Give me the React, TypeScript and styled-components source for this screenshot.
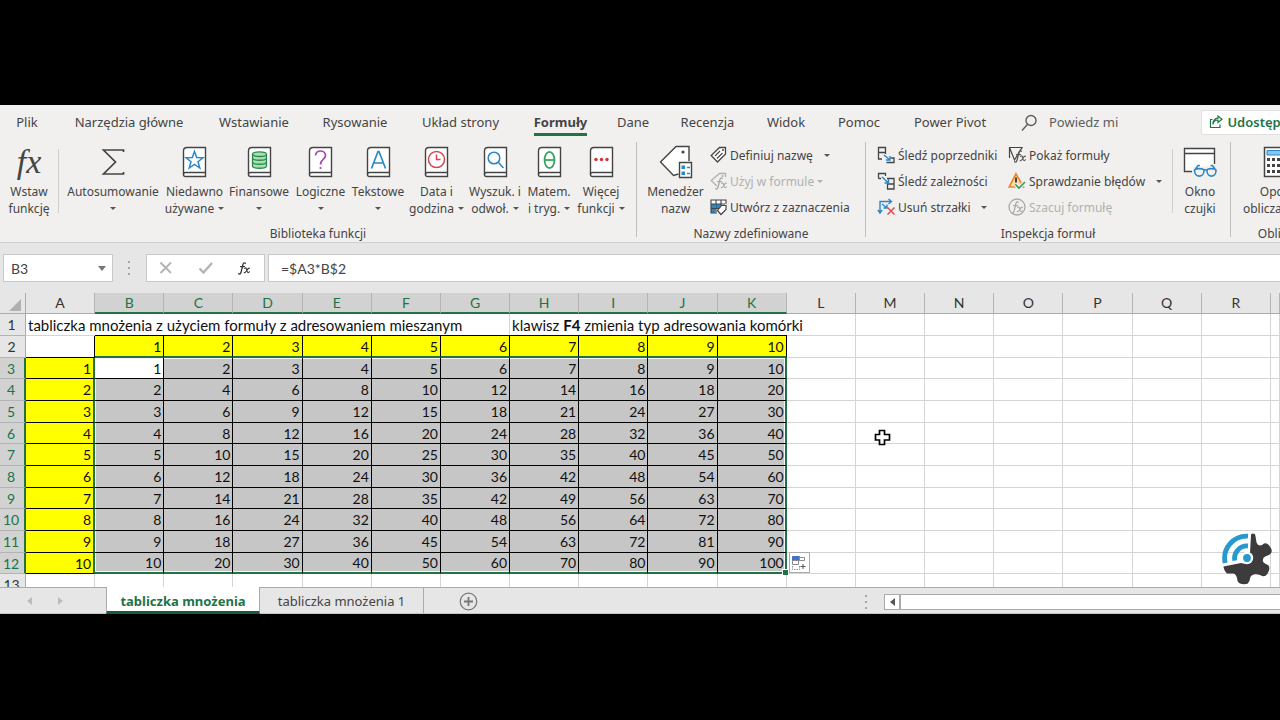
import React from 'react';
import styled, { createGlobalStyle, css } from 'styled-components';

const ink = '#444444';
const green = '#217346';
const darkGreen = '#185c37';
const blue = '#2b88c8';
const uiFont = '"Noto Sans", "Open Sans", sans-serif';
const cellFont = 'Lato, "Open Sans", sans-serif';

const GlobalStyle = createGlobalStyle`
  * { box-sizing: border-box; }
  body { margin: 0; background: #000; font-family: ${uiFont}; color: ${ink}; }
  button, input { font: inherit; color: inherit; }
  button { border: 0; background: none; padding: 0; margin: 0; }
`;

const Page = styled.div`
  min-height: 100vh;
  display: flex;
  flex-direction: column;
  justify-content: center;
  padding-bottom: 1px;
  overflow: hidden;
`;

const Workbook = styled.main`
  position: relative;
  background: #e6e6e6;
  overflow: hidden;
`;

/* ---------- ribbon ---------- */

const Ribbon = styled.header`
  background: #f1f0ef;
  border-bottom: 1px solid #d0d0d0;
`;

const TabRow = styled.nav`
  display: flex;
  align-items: center;
  height: 34px;
  overflow: hidden;
`;

const Tab = styled.button<{ $w: number; $active?: boolean }>`
  flex: none;
  width: ${p => p.$w}px;
  font-size: 13px;
  line-height: 20px;
  white-space: nowrap;
  ${p => p.$active && css`font-weight: 700;`}
  span {
    display: inline-block;
    padding: 4px 0 1px;
    border-bottom: 3px solid ${p => (p.$active ? green : 'transparent')};
  }
`;

const TellMe = styled.button`
  flex: none;
  display: flex;
  align-items: center;
  gap: 12px;
  margin-left: 22px;
  font-size: 13px;
  line-height: 20px;
  color: #5c5c5c;
  white-space: nowrap;
`;

const Share = styled.button`
  flex: none;
  display: flex;
  align-items: center;
  gap: 4px;
  height: 25px;
  margin-left: 83px;
  padding: 0 12px 0 7px;
  background: #fff;
  border: 1px solid #e2e0de;
  border-radius: 2px;
  color: ${green};
  font-size: 13px;
  font-weight: 600;
  line-height: 20px;
  white-space: nowrap;
`;

const Groups = styled.div`
  display: flex;
  height: 103px;
  overflow: hidden;
`;

const Group = styled.section<{ $w: number }>`
  flex: none;
  width: ${p => p.$w}px;
  display: flex;
  flex-direction: column;
  justify-content: space-between;
`;

const GroupBody = styled.div<{ $indent?: number }>`
  display: flex;
  padding-left: ${p => p.$indent ?? 0}px;
`;

const GroupTitle = styled.h2`
  margin: 0;
  text-align: center;
  font-size: 12px;
  font-weight: 400;
  line-height: 16px;
`;

const Divider = styled.i`
  flex: none;
  width: 1px;
  margin: 3px 0 5px;
  background: #c0bfbe;
`;

const InnerDivider = styled.i`
  flex: none;
  width: 1px;
  height: 64px;
  margin-top: 10px;
  background: #d0cfce;
`;

const BigButton = styled.button<{ $w: number }>`
  flex: none;
  width: ${p => p.$w}px;
  display: flex;
  flex-direction: column;
  align-items: center;
  padding-top: 5px;
  font-size: 12px;
  line-height: 17px;
  white-space: nowrap;
`;

const BigIcon = styled.span`
  display: grid;
  place-items: center;
  height: 36px;
  margin-bottom: 3px;
`;

const LabelLine = styled.span`
  display: flex;
  align-items: center;
  gap: 4px;
  min-height: 17px;
`;

const Caret = styled.i<{ $faded?: boolean }>`
  border: 3px solid transparent;
  border-top-color: ${p => (p.$faded ? '#b0b0b0' : '#555')};
  border-bottom: 0;
`;

const CommandList = styled.div`
  display: flex;
  flex-direction: column;
  margin-top: 3px;
`;

const Command = styled.button`
  display: flex;
  align-items: center;
  height: 26px;
  gap: 3px;
  font-size: 12px;
  line-height: 17px;
  white-space: nowrap;
  &:disabled { color: #b0b0b0; }
  svg { flex: none; }
`;

const CaretSlot = styled.span<{ $gap: number }>`
  display: flex;
  margin-left: ${p => p.$gap}px;
`;

/* ---------- formula bar ---------- */

const FormulaBar = styled.div`
  display: flex;
  align-items: center;
  padding: 11px 0 11px 3px;
  font-family: ${cellFont};
  font-size: 14px;
`;

const Box = styled.div`
  display: flex;
  align-items: center;
  height: 28px;
  background: #fff;
  border: 1px solid #c8c8c8;
`;

const NameBox = styled(Box)`
  width: 110px;
  padding-right: 6px;
`;

const BoxInput = styled.input`
  flex: 1;
  min-width: 0;
  height: 100%;
  border: 0;
  outline: 0;
  background: none;
  padding: 0 0 0 7px;
`;

const FormulaBox = styled(Box)`
  flex: 1;
  margin-left: 3px;
  border-right: 0;
  padding-left: 5px;
`;

const NameCaret = styled.i`
  border: 4px solid transparent;
  border-top: 5px solid #777;
  border-bottom: 0;
`;

const Grip = styled.i`
  width: 2px;
  height: 14px;
  background: repeating-linear-gradient(#a6a6a6 0 2px, transparent 2px 6px);
`;

const NameGrip = styled(Grip)`
  margin: 0 16px 0 15px;
`;

const FormulaActions = styled(Box)`
  width: 119px;
  justify-content: space-between;
  padding: 0 12px;
  button { display: flex; }
`;

/* ---------- worksheet ---------- */

const Sheet = styled.div`
  position: relative;
  height: 294px;
  overflow: hidden;
  font-family: ${cellFont};
`;

const Grid = styled.table`
  width: 100%;
  table-layout: fixed;
  border-collapse: separate;
  border-spacing: 0;
  font-size: 14px;
  line-height: 18px;
  color: #111;
  tbody tr { height: 22px; }
  tbody tr:nth-child(3n) { height: 21px; }
`;

const Corner = styled.th`
  height: 21px;
  padding: 0;
  border-right: 1px solid #ababab;
  border-bottom: 1px solid #ababab;
  svg { display: block; margin: 4px 0 0 8px; }
`;

const ColHead = styled.th<{ $on?: boolean }>`
  height: 21px;
  padding: 0;
  font-weight: 400;
  color: ${p => (p.$on ? green : '#333')};
  background: ${p => (p.$on ? '#d2d2d2' : '#e6e6e6')};
  border-right: 1px solid #b4b4b4;
  border-bottom: ${p => (p.$on ? `2px solid ${green}` : '1px solid #ababab')};
`;

const RowHead = styled.th<{ $on?: boolean }>`
  padding: 1px 2px 0 0;
  font-weight: 400;
  color: ${p => (p.$on ? green : '#333')};
  background: ${p => (p.$on ? '#d2d2d2' : '#e6e6e6')};
  border-bottom: 1px solid #b4b4b4;
  border-right: ${p => (p.$on ? `2px solid ${green}` : '1px solid #ababab')};
`;

type Kind = 'plain' | 'factorTop' | 'factorLeft' | 'product';

const Cell = styled.td<{
  $kind?: Kind; $active?: boolean; $top?: boolean; $left?: boolean;
  $bottom?: boolean; $right?: boolean; $corner?: boolean;
}>`
  padding: 1px 2px 0;
  text-align: right;
  white-space: nowrap;
  background: #fff;
  border-right: 1px solid #d4d4d4;
  border-bottom: 1px solid #d4d4d4;
  ${p => p.$corner && css`border-color: #000;`}
  ${p => p.$kind === 'factorTop' && css`
    padding-top: 2px;
    background: #ffff00;
    border-right-color: #000;
    border-bottom: 2px solid ${green};
    box-shadow: 0 -1px 0 #000;
  `}
  ${p => p.$kind === 'factorLeft' && css`
    background: #ffff00;
    border-bottom-color: #000;
    border-right: 2px solid ${green};
  `}
  ${p => p.$kind === 'product' && css`
    position: relative;
    background: ${p.$active ? '#fff' : '#c6c6c6'};
    border-color: #000;
    ${p.$right && css`padding-right: 1px; border-right: 2px solid ${green};`}
    ${p.$bottom && css`border-bottom: 2px solid ${green};`}
    box-shadow:
      inset ${p.$left ? 1 : 0}px ${p.$top ? 1 : 0}px 0 #f4f4f4,
      inset ${p.$right ? -1 : 0}px ${p.$bottom ? -1 : 0}px 0 #f4f4f4;
  `}
`;

const TextCell = styled(Cell)`
  padding-top: 0;
  text-align: left;
  font-size: 15px;
`;

const FillHandle = styled.i`
  position: absolute;
  right: -3px;
  bottom: -3px;
  width: 6px;
  height: 6px;
  background: ${green};
  border: 1px solid #fff;
  border-width: 1px 0 0 1px;
`;

const FillOptions = styled.button`
  position: absolute;
  left: calc(100% + 4px);
  top: -1px;
  width: 21px;
  height: 21px;
  display: grid;
  place-items: center;
  background: #fff;
  border: 1px solid #ababab;
  z-index: 1;
`;

const Pointer = styled.svg`
  position: absolute;
  left: 874px;
  top: 136px;
`;

const Watermark = styled.svg`
  position: absolute;
  right: 7px;
  bottom: 28px;
  z-index: 2;
`;

/* ---------- sheet tabs ---------- */

const SheetBar = styled.footer`
  display: flex;
  align-items: stretch;
  height: 27px;
  border-top: 1px solid #ababab;
  border-bottom: 1px solid #c4c4c4;
  font-size: 13px;
`;

const SheetNav = styled.div`
  display: flex;
  align-items: center;
  gap: 26px;
  width: 106px;
  padding-left: 27px;
  button { display: flex; }
`;

const SheetTab = styled.button<{ $active?: boolean }>`
  flex: none;
  width: ${p => (p.$active ? 154 : 164)}px;
  padding-top: 1px;
  white-space: nowrap;
  line-height: 20px;
  border-right: 1px solid #ababab;
  ${p => p.$active && css`
    margin: -1px 0;
    padding-top: 3px;
    font-weight: 700;
    color: ${green};
    background: #fff;
    border-left: 1px solid #ababab;
    border-bottom: 3px solid ${darkGreen};
  `}
`;

const AddSheet = styled.button`
  display: flex;
  align-items: center;
  margin-left: 35px;
  padding-top: 2px;
`;

const ScrollArea = styled.div`
  display: flex;
  align-items: center;
  width: 415px;
  margin-left: auto;
  padding-top: 2px;
`;

const ScrollArrow = styled.button`
  display: grid;
  place-items: center;
  width: 16px;
  height: 16px;
  margin-left: 17px;
  background: #fff;
  border: 1px solid #ababab;
`;

const ScrollThumb = styled.div`
  flex: 1;
  height: 16px;
  background: #fff;
  border: 1px solid #ababab;
  border-right: 0;
`;

/* ---------- drawings ---------- */

const Book = ({ children }: { children: React.ReactNode }) => (
  <svg width="25" height="32" viewBox="0 0 25 32" fill="none">
    <path d="M5 1.5H23.5V30.5H3.5Q1.5 30.5 1.5 28.5V5Q1.5 1.5 5 1.5Z" fill="#fff" stroke="#444" strokeWidth="1.4" />
    <path d="M1.5 28.5Q1.5 26.5 3.5 26.5H23.5" stroke="#444" strokeWidth="1.4" />
    {children}
  </svg>
);

const Fx = styled.span<{ $size: number }>`
  font-family: "Liberation Serif", serif;
  font-style: italic;
  font-size: ${p => p.$size}px;
  line-height: 1;
`;

const SmallFx = ({ x = 0, y = 0, color = '#555' }: { x?: number; y?: number; color?: string }) => (
  <g transform={`translate(${x} ${y})`} fill="none" stroke={color} strokeLinecap="round">
    <path d="M7.4 1.2C6.2 .2 5.2 1.2 4.8 3L3.2 9.6C2.8 11.6 1.8 12.6 .6 11.8M2.6 4.6H6.4" strokeWidth="1.3" />
    <path d="M6.6 6.4C8.6 4.8 8.4 7.4 9 9C9.4 10.8 10.4 11.2 11.4 9.8M11.4 6.2C9.4 5.4 8.6 10.6 6.2 10.8" strokeWidth="1.1" />
  </g>
);

const SigmaIcon = () => (
  <svg width="24" height="28" viewBox="0 0 24 28" fill="none" stroke="#444" strokeWidth="1.7">
    <path d="M22.5 4V2H2.5L14.5 14L2.5 26H22.5V24" />
  </svg>
);

const StarGlyph = () => (
  <path d="M12.5 5.5L14.7 11.6L21 11.8L16 15.7L17.8 22L12.5 18.4L7.2 22L9 15.7L4 11.8L10.3 11.6Z" stroke={blue} strokeWidth="1.5" />
);
const CoinsGlyph = () => (
  <g stroke="#2a8a4a" strokeWidth="1.3" fill="#a8e0b4">
    <path d="M5.5 8V20C5.5 23 19.5 23 19.5 20V8" />
    <ellipse cx="12.5" cy="8.2" rx="7" ry="2.3" />
    <path d="M5.5 12C5.5 15 19.5 15 19.5 12M5.5 16C5.5 19 19.5 19 19.5 16" fill="none" />
  </g>
);
const QuestionGlyph = () => (
  <g stroke="#a646b4" strokeWidth="1.7">
    <path d="M7.5 9.5C7.5 3.5 17.5 3.5 17.5 9.5C17.5 13.5 12.5 13.5 12.5 18.5" />
    <path d="M12.5 21V23" />
  </g>
);
const LetterGlyph = () => <path d="M5.5 22.5L12 5.5H13L19.5 22.5M8 17H17" stroke={blue} strokeWidth="1.7" />;
const ClockGlyph = () => (
  <g stroke="#d64550" strokeWidth="1.5">
    <circle cx="12.5" cy="13.5" r="8" />
    <path d="M12.5 8.5V13.5H16.5" />
  </g>
);
const LensGlyph = () => (
  <g stroke={blue} strokeWidth="1.6">
    <circle cx="11" cy="12" r="5.8" />
    <path d="M15.2 16.2L20.5 22" />
  </g>
);
const ThetaGlyph = () => (
  <g stroke="#2fa35a" strokeWidth="1.7">
    <ellipse cx="12.5" cy="14" rx="5" ry="8.2" />
    <path d="M7.5 14H17.5" />
  </g>
);
const DotsGlyph = () => (
  <g fill="#d13438">
    <circle cx="7" cy="13.5" r="1.7" />
    <circle cx="12.5" cy="13.5" r="1.7" />
    <circle cx="18" cy="13.5" r="1.7" />
  </g>
);

const NameManagerIcon = () => (
  <svg width="34" height="34" viewBox="0 0 34 34" fill="none">
    <path d="M19.5 29L14.5 30.5L1.5 17L17 1.5L30 1.5V16" fill="#fff" stroke="#444" strokeWidth="1.4" />
    <circle cx="24" cy="7" r="1.6" fill="#444" />
    <path d="M20.5 17.5H32.5V32.5H20.5Z" fill="#fff" stroke="#444" strokeWidth="1.4" />
    <path d="M22.5 20.5H26V24H22.5ZM22.5 26.5H26V30H22.5Z" fill={blue} />
    <path d="M28 22.5H31M28 28.5H31" stroke={blue} strokeWidth="1.3" />
  </svg>
);

const TagIcon = () => (
  <svg width="17" height="18" viewBox="0 0 17 18" fill="none" stroke="#444" strokeWidth="1.3">
    <path d="M9.5 1.5H15.5V8L7.5 16L1.2 9.5Z" fill="#fff" />
    <circle cx="13" cy="4" r="1" fill="#444" stroke="none" />
    <path d="M5 10L10 5M7 12.5L12.5 7" strokeWidth="1.1" />
  </svg>
);

const UseInFormulaIcon = () => (
  <svg width="17" height="18" viewBox="0 0 17 18" fill="none">
    <path d="M7 14L1.2 8.5L9.5 1.5H15.5V5" stroke="#b0b0b0" strokeWidth="1.3" />
    <circle cx="12.5" cy="4" r="1" fill="#b0b0b0" />
    <SmallFx x={5} y={5} color="#a8a8a8" />
  </svg>
);

const FromSelectionIcon = () => (
  <svg width="17" height="18" viewBox="0 0 17 18" fill="none">
    <path d="M1 2H16V6H11L6 15H1Z" fill="#fff" />
    <path d="M1 6H5.5V15H1ZM6 6H11V10H6Z" fill={blue} />
    <path d="M16 6V2H1V15H7M1 6H15M1 10.5H9M6 2V14M11 2V7" stroke="#444" strokeWidth="1.1" />
    <path d="M11.5 7.5H16V11.5L11 16.5L7.5 12.5Z" fill="#fff" stroke="#444" strokeWidth="1.2" />
  </svg>
);

const PrecedentsIcon = () => (
  <svg width="18" height="18" viewBox="0 0 18 18" fill="none">
    <path d="M1.5 1.5H8.5V6.5H1.5ZM5 13H1.5V6.5H8.5V8M9.5 16.5H17V12H14" stroke="#444" strokeWidth="1.3" />
    <path d="M7 9L13 14M13 10V14H9" stroke={blue} strokeWidth="1.5" />
  </svg>
);

const DependentsIcon = () => (
  <svg width="18" height="18" viewBox="0 0 18 18" fill="none">
    <path d="M1.5 6.5V1.5H8.5V4M4 6.5H1.5M10 6.5H17V17H10.5V12H17M10.5 12V13.5" stroke="#444" strokeWidth="1.3" />
    <path d="M5 5L11.5 11M11.5 7V11H7.5" stroke={blue} strokeWidth="1.5" />
  </svg>
);

const RemoveArrowsIcon = () => (
  <svg width="18" height="18" viewBox="0 0 18 18" fill="none">
    <path d="M3 15V3.5H14M11.5 1L14.5 3.5L11.5 6M.8 12L3 15L5.2 12M5 6L10 10M10 6.5V10H6.5" stroke={blue} strokeWidth="1.4" />
    <path d="M10.5 9.5L17.5 16.5M17.5 9.5L10.5 16.5" stroke="#e04a4a" strokeWidth="1.5" />
  </svg>
);

const ShowFormulasIcon = () => (
  <svg width="18" height="18" viewBox="0 0 18 18" fill="none">
    <path d="M1.5 12V1.5H14L6.5 14L1.5 1.5" stroke="#444" strokeWidth="1.2" />
    <SmallFx x={6} y={4} />
  </svg>
);

const ErrorCheckIcon = () => (
  <svg width="18" height="18" viewBox="0 0 18 18" fill="none">
    <path d="M8 1.8L15.5 15H1.2Z" fill="#fbd9a8" stroke="#e8862e" strokeWidth="1.6" />
    <path d="M8 5.5V10.5M8 12V13.5" stroke="#333" strokeWidth="1.8" />
    <path d="M7.5 12.5L11 16L17 10" stroke="#f1f0ef" strokeWidth="4" />
    <path d="M7.5 12.5L11 16L17 10" stroke="#35a15b" strokeWidth="1.7" />
  </svg>
);

const EvaluateIcon = () => (
  <svg width="18" height="18" viewBox="0 0 18 18" fill="none">
    <circle cx="9" cy="9" r="8" stroke="#a8a8a8" strokeWidth="1.3" />
    <SmallFx x={3} y={3} color="#a8a8a8" />
  </svg>
);

const WatchIcon = () => (
  <svg width="34" height="30" viewBox="0 0 34 30" fill="none">
    <path d="M2 2H31V17L27 19L10 20V24H2Z" fill="#fff" />
    <path d="M9 24.5H1.5V1.5H31.5V17M1.5 6.5H31.5" stroke="#444" strokeWidth="1.4" />
    <path
      d="M11.5 23.5C11.5 21 21 21 21 23.5C21 31 11.5 31 11.5 23.5ZM24 23.5C24 21 33 21 33 23.5C33 31 24 31 24 23.5ZM21 23.5Q22.5 22 24 23.5M11.5 23.5L15 18.5H17M33 23.5L29.5 18.5H27.5"
      stroke={blue} strokeWidth="1.6"
    />
  </svg>
);

const CalcIcon = () => (
  <svg width="26" height="32" viewBox="0 0 26 32" fill="none">
    <path d="M1.5 1.5H24.5V30.5H1.5Z" fill="#fff" stroke="#444" strokeWidth="1.5" />
    <path d="M4 4.5H22V9H4Z" fill="#8cc4f0" stroke={blue} />
    {[12, 18, 24].map(y => [4, 9, 14, 19].map(x => <rect key={`${x}-${y}`} x={x} y={y} width="3" height="3" fill="#444" />))}
  </svg>
);

const SearchIcon = () => (
  <svg width="16" height="18" viewBox="0 0 16 18" fill="none" stroke="#5c5c5c" strokeWidth="1.4">
    <circle cx="10" cy="7.5" r="5" />
    <path d="M6.6 11.2L1 17.5" />
  </svg>
);

const ShareIcon = () => (
  <svg width="14" height="14" viewBox="0 0 14 14" fill="none" stroke={green} strokeWidth="1.2">
    <path d="M3.5 4.5H1.5V12.5H11V9.5" />
    <path d="M4 9.5C4.5 6 6.5 5 9 5V7.5L13 4.2L9 1V3.2C6 3.4 4 5.5 4 9.5Z" />
  </svg>
);

const CancelIcon = () => (
  <svg width="14" height="14" viewBox="0 0 14 14" stroke="#b4b4b4" strokeWidth="1.9"><path d="M1.5 1.5L12 12M12 1.5L1.5 12" /></svg>
);
const AcceptIcon = () => (
  <svg width="16" height="14" viewBox="0 0 16 14" fill="none" stroke="#b4b4b4" strokeWidth="2.4"><path d="M1.5 7.5L5.5 11.5L14 2" /></svg>
);
const InsertFxIcon = () => (
  <svg width="14" height="15" viewBox="0 0 14 15"><SmallFx x={0} y={1} color="#333" /></svg>
);

const CornerIcon = () => (
  <svg width="15" height="13" viewBox="0 0 15 13"><path d="M13 0V12H1Z" fill="#b0b0b0" /></svg>
);

const FillIcon = () => (
  <svg width="16" height="16" viewBox="0 0 16 16" fill="none" stroke="#8a8a8a">
    <path d="M1.5 1.5H8.5V5.5H1.5Z" fill="#4472c4" stroke="#4472c4" />
    <path d="M8.5 2.5H13.5V5.5H8.5ZM1.5 5.5H7.5V9.5H1.5Z" fill="#fff" />
    <path d="M1.5 11V14.5H8.5V11" strokeDasharray="1.5 1" />
    <path d="M12 9V14M9.5 11.5H14.5" stroke="#555" />
  </svg>
);

const NavArrow = ({ flip }: { flip?: boolean }) => (
  <svg width="5" height="8" viewBox="0 0 5 8"><path d={flip ? 'M0 0L5 4L0 8Z' : 'M5 0L0 4L5 8Z'} fill="#bcbcbc" /></svg>
);

const PlusIcon = () => (
  <svg width="19" height="19" viewBox="0 0 19 19" fill="none" stroke="#777">
    <circle cx="9.5" cy="9.5" r="8.3" strokeWidth="1.2" />
    <path d="M9.5 5V14M5 9.5H14" strokeWidth="1.8" />
  </svg>
);

const GearLogo = () => (
  <Watermark width="52" height="54" viewBox="0 0 52 54" fill="none" aria-hidden="true">
    <path
      d="M30 3Q30 1.4 32 1.5Q34.2 1.7 34.4 3.5L35.5 10.5Q36.5 13.2 39 13.5Q41 13.3 43 11.5Q45.5 10.3 47.8 13Q50.5 16 50.8 19Q50.6 21.8 47.3 23.2Q43 24.5 42.2 26.5Q41.2 29 42.6 30.6Q44 32 47 33Q49 34.6 48 38.5Q46.8 42 44.5 43.8Q42.5 45 39 43Q36 41.8 33.5 42.3Q30.5 43 29.4 45Q29 49.5 26.5 51.8Q22 53 18 51Q16 49.5 16 46Q15.2 42.3 12.2 41.4L6.5 41.6Q3.6 40.5 2.4 34.6L20 31Q31 34 29 21Z"
      fill="#3d3b3c"
    />
    <circle cx="26" cy="26" r="6.2" fill="#fff" />
    <circle cx="26" cy="26" r="3.9" fill="#2699cf" />
    <path d="M4.2 31A22 22 0 0 1 27 4.2M13.8 28.6A12.4 12.4 0 0 1 27 14" stroke="#2699cf" strokeWidth="4.8" />
  </Watermark>
);

/* ---------- data ---------- */

const tabs: [string, number][] = [
  ['Plik', 54], ['Narzędzia główne', 150], ['Wstawianie', 100], ['Rysowanie', 102],
  ['Układ strony', 109], ['Formuły', 91], ['Dane', 54], ['Recenzja', 95],
  ['Widok', 62], ['Pomoc', 84], ['Power Pivot', 98],
];

const library: { w: number; lines: [string, string]; glyph: React.ReactNode }[] = [
  { w: 63, lines: ['Niedawno', 'używane'], glyph: <StarGlyph /> },
  { w: 66, lines: ['Finansowe', ''], glyph: <CoinsGlyph /> },
  { w: 57, lines: ['Logiczne', ''], glyph: <QuestionGlyph /> },
  { w: 58, lines: ['Tekstowe', ''], glyph: <LetterGlyph /> },
  { w: 59, lines: ['Data i', 'godzina'], glyph: <ClockGlyph /> },
  { w: 58, lines: ['Wyszuk. i', 'odwoł.'], glyph: <LensGlyph /> },
  { w: 50, lines: ['Matem.', 'i tryg.'], glyph: <ThetaGlyph /> },
  { w: 54, lines: ['Więcej', 'funkcji'], glyph: <DotsGlyph /> },
];

const columns = 'ABCDEFGHIJKLMNOPQR'.split('');
const factors = [1, 2, 3, 4, 5, 6, 7, 8, 9, 10];
const spare = columns.slice(11);

interface BigProps { w: number; icon: React.ReactNode; lines: [string, string]; menu?: boolean }

const Big = ({ w, icon, lines, menu }: BigProps) => (
  <BigButton $w={w} type="button">
    <BigIcon>{icon}</BigIcon>
    <LabelLine>{lines[0]}</LabelLine>
    <LabelLine>{lines[1]}{menu && <Caret />}</LabelLine>
  </BigButton>
);

export default function App() {
  return (
    <Page>
      <GlobalStyle />
      <Workbook>
        <Ribbon>
          <TabRow aria-label="Wstążka">
            {tabs.map(([name, w]) => (
              <Tab key={name} type="button" $w={w} $active={name === 'Formuły'}><span>{name}</span></Tab>
            ))}
            <TellMe type="button"><SearchIcon />Powiedz mi</TellMe>
            <Share type="button"><ShareIcon />Udostępnianie</Share>
          </TabRow>
          <Groups>
            <Group $w={636}>
              <GroupBody>
                <Big w={58} icon={<Fx $size={34}>fx</Fx>} lines={['Wstaw', 'funkcję']} />
                <InnerDivider />
                <GroupBody $indent={4}>
                  <Big w={100} icon={<SigmaIcon />} lines={['Autosumowanie', '']} menu />
                  {library.map(item => (
                    <Big key={item.lines[0]} w={item.w} icon={<Book>{item.glyph}</Book>} lines={item.lines} menu />
                  ))}
                </GroupBody>
              </GroupBody>
              <GroupTitle>Biblioteka funkcji</GroupTitle>
            </Group>
            <Divider />
            <Group $w={228}>
              <GroupBody $indent={4}>
                <Big w={69} icon={<NameManagerIcon />} lines={['Menedżer', 'nazw']} />
                <CommandList>
                  <Command type="button"><TagIcon />Definiuj nazwę<CaretSlot $gap={8}><Caret /></CaretSlot></Command>
                  <Command type="button" disabled><UseInFormulaIcon />Użyj w formule<Caret $faded /></Command>
                  <Command type="button"><FromSelectionIcon />Utwórz z zaznaczenia</Command>
                </CommandList>
              </GroupBody>
              <GroupTitle>Nazwy zdefiniowane</GroupTitle>
            </Group>
            <Divider />
            <Group $w={364}>
              <GroupBody $indent={11}>
                <GroupBody>
                  <Group $w={131}>
                    <CommandList>
                      <Command type="button"><PrecedentsIcon />Śledź poprzedniki</Command>
                      <Command type="button"><DependentsIcon />Śledź zależności</Command>
                      <Command type="button"><RemoveArrowsIcon />Usuń strzałki<CaretSlot $gap={8}><Caret /></CaretSlot></Command>
                    </CommandList>
                  </Group>
                  <Group $w={164}>
                    <CommandList>
                      <Command type="button"><ShowFormulasIcon />Pokaż formuły</Command>
                      <Command type="button"><ErrorCheckIcon />Sprawdzanie błędów<CaretSlot $gap={8}><Caret /></CaretSlot></Command>
                      <Command type="button" disabled><EvaluateIcon />Szacuj formułę</Command>
                    </CommandList>
                  </Group>
                </GroupBody>
                <InnerDivider />
                <Big w={54} icon={<WatchIcon />} lines={['Okno', 'czujki']} />
              </GroupBody>
              <GroupTitle>Inspekcja formuł</GroupTitle>
            </Group>
            <Divider />
            <Group $w={112}>
              <GroupBody $indent={6}>
                <Big w={78} icon={<CalcIcon />} lines={['Opcje', 'obliczania']} menu />
              </GroupBody>
              <GroupTitle>Obliczanie</GroupTitle>
            </Group>
          </Groups>
        </Ribbon>

        <FormulaBar>
          <NameBox>
            <BoxInput aria-label="Pole nazwy" defaultValue="B3" />
            <NameCaret />
          </NameBox>
          <NameGrip />
          <FormulaActions>
            <button type="button" aria-label="Anuluj"><CancelIcon /></button>
            <button type="button" aria-label="Wpis"><AcceptIcon /></button>
            <button type="button" aria-label="Wstaw funkcję"><InsertFxIcon /></button>
          </FormulaActions>
          <FormulaBox>
            <BoxInput aria-label="Pasek formuły" defaultValue="=$A3*B$2" />
          </FormulaBox>
        </FormulaBar>

        <Sheet>
          <Grid>
            <colgroup>
              <col style={{ width: 26 }} />
              {columns.map(c => <col key={c} />)}
              <col style={{ width: 9 }} />
            </colgroup>
            <thead>
              <tr>
                <Corner aria-label="Zaznacz wszystko"><CornerIcon /></Corner>
                {columns.map((c, i) => <ColHead key={c} $on={i >= 1 && i <= 10}>{c}</ColHead>)}
                <ColHead />
              </tr>
            </thead>
            <tbody>
              <tr>
                <RowHead>1</RowHead>
                <TextCell colSpan={7}>tabliczka mnożenia z użyciem formuły z adresowaniem mieszanym</TextCell>
                <TextCell colSpan={5}>klawisz <b>F4</b> zmienia typ adresowania komórki</TextCell>
                {spare.slice(1).map(c => <Cell key={c} />)}
                <Cell />
              </tr>
              <tr>
                <RowHead>2</RowHead>
                <Cell $corner />
                {factors.map(f => <Cell key={f} $kind="factorTop">{f}</Cell>)}
                {spare.map(c => <Cell key={c} />)}
                <Cell />
              </tr>
              {factors.map(row => (
                <tr key={row}>
                  <RowHead $on>{row + 2}</RowHead>
                  <Cell $kind="factorLeft">{row}</Cell>
                  {factors.map(col => (
                    <Cell
                      key={col}
                      $kind="product"
                      $active={row === 1 && col === 1}
                      $top={row === 1}
                      $left={col === 1}
                      $bottom={row === 10}
                      $right={col === 10}
                    >
                      {row * col}
                      {row === 10 && col === 10 && (
                        <>
                          <FillHandle />
                          <FillOptions type="button" aria-label="Opcje autowypełniania"><FillIcon /></FillOptions>
                        </>
                      )}
                    </Cell>
                  ))}
                  {spare.map(c => <Cell key={c} />)}
                  <Cell />
                </tr>
              ))}
              <tr>
                <RowHead>13</RowHead>
                {columns.map(c => <Cell key={c} />)}
                <Cell />
              </tr>
            </tbody>
          </Grid>
          <Pointer width="17" height="17" viewBox="0 0 17 17" aria-hidden="true">
            <path d="M5.5 1.5H10.5V5.5H15.5V11H10.5V15.5H5.5V11H1.5V5.5H5.5Z" fill="#fff" stroke="#000" strokeWidth="1.7" />
          </Pointer>
        </Sheet>

        <SheetBar>
          <SheetNav>
            <button type="button" aria-label="Poprzedni arkusz"><NavArrow /></button>
            <button type="button" aria-label="Następny arkusz"><NavArrow flip /></button>
          </SheetNav>
          <SheetTab type="button" $active>tabliczka mnożenia</SheetTab>
          <SheetTab type="button">tabliczka mnożenia 1</SheetTab>
          <AddSheet type="button" aria-label="Nowy arkusz"><PlusIcon /></AddSheet>
          <ScrollArea>
            <Grip />
            <ScrollArrow type="button" aria-label="Przewiń w lewo">
              <svg width="5" height="8" viewBox="0 0 5 8"><path d="M5 0L0 4L5 8Z" fill="#555" /></svg>
            </ScrollArrow>
            <ScrollThumb />
          </ScrollArea>
        </SheetBar>
        <GearLogo />
      </Workbook>
    </Page>
  );
}
